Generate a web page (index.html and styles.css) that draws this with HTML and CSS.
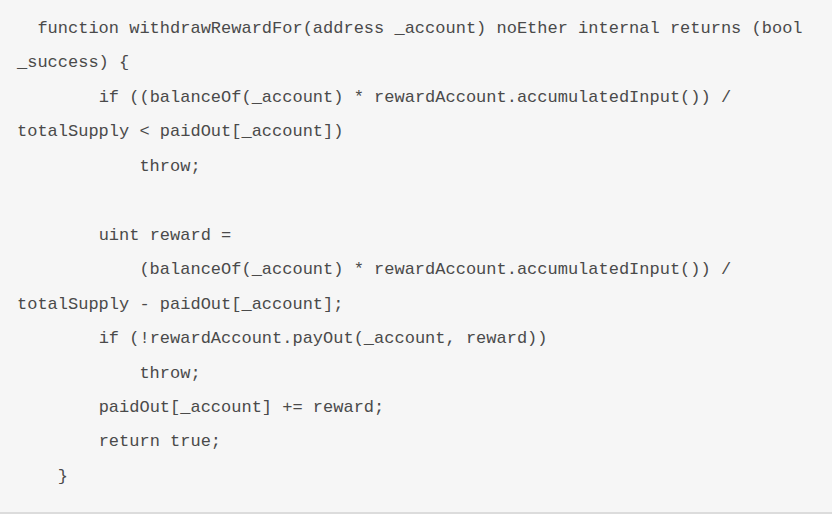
FILE: index.html
```html
<!DOCTYPE html>
<html>
<head>
<meta charset="utf-8">
<link rel="stylesheet" href="styles.css">
</head>
<body>
<pre class="code">  function withdrawRewardFor(address _account) noEther internal returns (bool _success) {
        if ((balanceOf(_account) * rewardAccount.accumulatedInput()) / totalSupply &lt; paidOut[_account])
            throw;

        uint reward =
            (balanceOf(_account) * rewardAccount.accumulatedInput()) / totalSupply - paidOut[_account];
        if (!rewardAccount.payOut(_account, reward))
            throw;
        paidOut[_account] += reward;
        return true;
    }</pre>
</body>
</html>
```
FILE: styles.css
```css
html, body {
  margin: 0;
  padding: 0;
  background: #ffffff;
}
.code {
  margin: 0;
  box-sizing: border-box;
  width: 832px;
  height: 514px;
  padding: 12px 17px 0 17px;
  background: #f6f6f6;
  border-bottom: 2px solid #dcdcdc;
  color: #4a4a4a;
  font-family: "Liberation Mono", "Courier New", monospace;
  font-size: 17px;
  line-height: 34.46px;
  white-space: pre-wrap;
  word-wrap: break-word;
  overflow: hidden;
}
```
